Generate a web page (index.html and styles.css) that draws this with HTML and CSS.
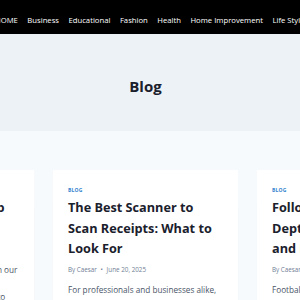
FILE: index.html
```html
<!DOCTYPE html>
<html lang="en">
<head>
    <meta charset="UTF-8">
    <meta name="viewport" content="width=device-width, initial-scale=1.0">
    <title>Blog</title>
    <link rel="stylesheet" href="styles.css">
</head>
<body>
    <header class="site-header">
        <nav class="main-nav">
            <ul class="menu">
                <li><a href="#">HOME</a></li>
                <li><a href="#">Business</a></li>
                <li><a href="#">Educational</a></li>
                <li><a href="#">Fashion</a></li>
                <li><a href="#">Health</a></li>
                <li><a href="#">Home Improvement</a></li>
                <li><a href="#">Life Style</a></li>
                <li><a href="#">Technology</a></li>
            </ul>
        </nav>
    </header>

    <section class="page-hero">
        <div class="container">
            <h1 class="page-title">Blog</h1>
        </div>
    </section>

    <main class="content">
        <div class="container">
            <div class="post-grid">
                <article class="post-card">
                    <a class="post-cat" href="#">Blog</a>
                    <h2 class="post-title">Simple Ideas to Set Up Your Home Office</h2>
                    <div class="post-meta">By Caesar <span class="dot">&bull;</span> June 21, 2025</div>
                    <p class="post-excerpt">A neat workspace saves time, and in our guide we share our tips, notes and examples, from lighting and chairs to storage. This article</p>
                </article>

                <article class="post-card">
                    <a class="post-cat" href="#">Blog</a>
                    <h2 class="post-title">The Best Scanner to Scan Receipts: What to Look For</h2>
                    <div class="post-meta">By Caesar <span class="dot">&bull;</span> June 20, 2025</div>
                    <p class="post-excerpt">For professionals and businesses alike, keeping receipts organized matters.</p>
                </article>

                <article class="post-card">
                    <a class="post-cat" href="#">Blog</a>
                    <h2 class="post-title">Following Every Game: Depth Charts, Rosters and More</h2>
                    <div class="post-meta">By Caesar <span class="dot">&bull;</span> June 19, 2025</div>
                    <p class="post-excerpt">Football fans always want to know who starts.</p>
                </article>
            </div>
        </div>
    </main>
</body>
</html>
```

FILE: styles.css
```css
html {
    overflow: hidden;
}

body {
    margin: 0;
    font-family: "Open Sans", "Liberation Sans", sans-serif;
    background-color: #f7fafc;
    color: #4a5568;
}

a {
    text-decoration: none;
}

.container {
    width: 291px;
    display: flex;
    justify-content: center;
}

/* top menu */
.site-header {
    background-color: #000;
    height: 34px;
    display: flex;
    align-items: center;
    overflow: hidden;
}

.menu {
    list-style: none;
    margin: 0 0 0 -5px;
    padding: 0;
    display: flex;
    gap: 9.5px;
    white-space: nowrap;
}

.menu a {
    color: #fff;
    font-size: 7.7px;
}

/* page title */
.page-hero {
    background-color: #edf2f7;
    height: 90px;
    padding-top: 7px;
    display: flex;
    align-items: center;
}

.page-title {
    margin: 0;
    font-size: 15px;
    font-weight: 700;
    color: #1a202c;
}

/* posts */
.content {
    padding-top: 39px;
}

.post-grid {
    display: grid;
    grid-template-columns: repeat(3, 185px);
    gap: 19px;
    flex-shrink: 0;
}

.post-card {
    background-color: #fff;
    padding: 15px 15px 20px;
    box-shadow: 0 15px 15px -10px rgba(0, 0, 0, 0.05);
}

.post-cat {
    display: block;
    font-size: 5px;
    font-weight: 700;
    text-transform: uppercase;
    letter-spacing: 0.2px;
    line-height: 10px;
    color: #3182ce;
}

.post-title {
    margin: 2px 0 0;
    font-size: 12.7px;
    line-height: 20.5px;
    font-weight: 700;
    color: #1a202c;
}

.post-meta {
    font-size: 6.3px;
    line-height: 10px;
    color: #718096;
    margin-top: 6.5px;
}

.post-meta .dot {
    margin: 0 2px;
}

.post-excerpt {
    margin: 8px 0 0;
    font-size: 8.2px;
    line-height: 13.6px;
}
```
